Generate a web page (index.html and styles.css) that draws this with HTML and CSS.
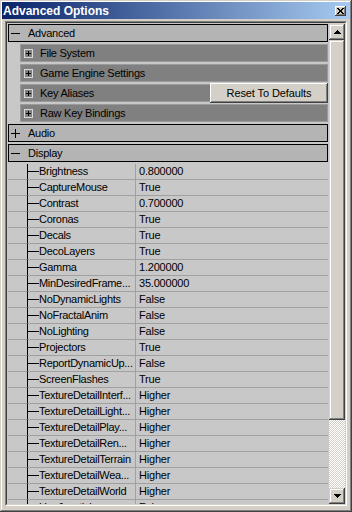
FILE: index.html
```html
<!DOCTYPE html>
<html lang="en">
<head>
  <meta charset="UTF-8" />
  <title>Advanced Options</title>
  <link rel="stylesheet" href="styles.css">
</head>
<body>
  <div class="window">
    <div class="titlebar">
      <span class="title">Advanced Options</span>
      <span class="close">
        <svg width="7" height="6" viewBox="0 0 7 6" shape-rendering="crispEdges"><path d="M0 0h2v1h-2zM5 0h2v1h-2zM1 1h2v1h-2zM4 1h2v1h-2zM2 2h3v2h-3zM1 4h2v1h-2zM4 4h2v1h-2zM0 5h2v1h-2zM5 5h2v1h-2z" fill="#000"/></svg>
      </span>
    </div>

    <div class="panel">
      <div class="panel-inner">
        <div class="list">
          <div class="group-head">
            <svg class="tog" width="9" height="9" viewBox="0 0 9 9" shape-rendering="crispEdges"><path d="M0 4.5h9" stroke="#000"/></svg>
            <span>Advanced</span>
          </div>
          <div class="sub-head">
            <svg class="box" width="9" height="9" viewBox="0 0 9 9" shape-rendering="crispEdges"><rect x="0.5" y="0.5" width="8" height="8" fill="none" stroke="#d8d8d8"/><path d="M2 4.5h5M4.5 2v5" stroke="#000"/></svg>
            <span>File System</span>
          </div>
          <div class="sub-head">
            <svg class="box" width="9" height="9" viewBox="0 0 9 9" shape-rendering="crispEdges"><rect x="0.5" y="0.5" width="8" height="8" fill="none" stroke="#d8d8d8"/><path d="M2 4.5h5M4.5 2v5" stroke="#000"/></svg>
            <span>Game Engine Settings</span>
          </div>
          <div class="sub-head">
            <svg class="box" width="9" height="9" viewBox="0 0 9 9" shape-rendering="crispEdges"><rect x="0.5" y="0.5" width="8" height="8" fill="none" stroke="#d8d8d8"/><path d="M2 4.5h5M4.5 2v5" stroke="#000"/></svg>
            <span>Key Aliases</span>
            <button class="reset">Reset To Defaults</button>
          </div>
          <div class="sub-head">
            <svg class="box" width="9" height="9" viewBox="0 0 9 9" shape-rendering="crispEdges"><rect x="0.5" y="0.5" width="8" height="8" fill="none" stroke="#d8d8d8"/><path d="M2 4.5h5M4.5 2v5" stroke="#000"/></svg>
            <span>Raw Key Bindings</span>
          </div>

          <div class="group-head">
            <svg class="tog" width="9" height="9" viewBox="0 0 9 9" shape-rendering="crispEdges"><path d="M0 4.5h9M4.5 0v9" stroke="#000"/></svg>
            <span>Audio</span>
          </div>

          <div class="group-head">
            <svg class="tog" width="9" height="9" viewBox="0 0 9 9" shape-rendering="crispEdges"><path d="M0 4.5h9" stroke="#000"/></svg>
            <span>Display</span>
          </div>

          <div class="props">
            <div class="prop"><span class="gutter"></span><span class="name">Brightness</span><span class="value">0.800000</span></div>
            <div class="prop"><span class="gutter"></span><span class="name">CaptureMouse</span><span class="value">True</span></div>
            <div class="prop"><span class="gutter"></span><span class="name">Contrast</span><span class="value">0.700000</span></div>
            <div class="prop"><span class="gutter"></span><span class="name">Coronas</span><span class="value">True</span></div>
            <div class="prop"><span class="gutter"></span><span class="name">Decals</span><span class="value">True</span></div>
            <div class="prop"><span class="gutter"></span><span class="name">DecoLayers</span><span class="value">True</span></div>
            <div class="prop"><span class="gutter"></span><span class="name">Gamma</span><span class="value">1.200000</span></div>
            <div class="prop"><span class="gutter"></span><span class="name">MinDesiredFrame...</span><span class="value">35.000000</span></div>
            <div class="prop"><span class="gutter"></span><span class="name">NoDynamicLights</span><span class="value">False</span></div>
            <div class="prop"><span class="gutter"></span><span class="name">NoFractalAnim</span><span class="value">False</span></div>
            <div class="prop"><span class="gutter"></span><span class="name">NoLighting</span><span class="value">False</span></div>
            <div class="prop"><span class="gutter"></span><span class="name">Projectors</span><span class="value">True</span></div>
            <div class="prop"><span class="gutter"></span><span class="name">ReportDynamicUp...</span><span class="value">False</span></div>
            <div class="prop"><span class="gutter"></span><span class="name">ScreenFlashes</span><span class="value">True</span></div>
            <div class="prop"><span class="gutter"></span><span class="name">TextureDetailInterf...</span><span class="value">Higher</span></div>
            <div class="prop"><span class="gutter"></span><span class="name">TextureDetailLight...</span><span class="value">Higher</span></div>
            <div class="prop"><span class="gutter"></span><span class="name">TextureDetailPlay...</span><span class="value">Higher</span></div>
            <div class="prop"><span class="gutter"></span><span class="name">TextureDetailRen...</span><span class="value">Higher</span></div>
            <div class="prop"><span class="gutter"></span><span class="name">TextureDetailTerrain</span><span class="value">Higher</span></div>
            <div class="prop"><span class="gutter"></span><span class="name">TextureDetailWea...</span><span class="value">Higher</span></div>
            <div class="prop"><span class="gutter"></span><span class="name">TextureDetailWorld</span><span class="value">Higher</span></div>
            <div class="prop"><span class="gutter"></span><span class="name">UseJoystick</span><span class="value">False</span></div>
          </div>
        </div>

        <div class="scrollbar">
          <div class="sb-btn">
            <svg width="7" height="4" viewBox="0 0 7 4" shape-rendering="crispEdges"><path d="M3 0h1v1h1v1h1v1h1v1h-7v-1h1v-1h1v-1h1z" fill="#000"/></svg>
          </div>
          <div class="sb-thumb"></div>
          <div class="sb-track"></div>
          <div class="sb-btn">
            <svg width="7" height="4" viewBox="0 0 7 4" shape-rendering="crispEdges"><path d="M0 0h7v1h-1v1h-1v1h-1v1h-1v-1h-1v-1h-1v-1h-1z" fill="#000"/></svg>
          </div>
        </div>
      </div>
    </div>
  </div>
</body>
</html>
```

FILE: styles.css
```css
* {
  box-sizing: border-box;
  margin: 0;
  padding: 0;
}

body {
  width: 352px;
  height: 512px;
  overflow: hidden;
  background: #d4d0c8;
  font-family: "Liberation Sans", Arial, sans-serif;
  font-size: 11px;
  letter-spacing: -0.25px;
  color: #000;
}

.window {
  height: 100%;
  display: flex;
  flex-direction: column;
  padding: 2px;
  box-shadow: inset -1px -1px #404040, inset 1px 1px #d4d0c8, inset -2px -2px #808080, inset 2px 2px #fff;
}

/* title bar */
.titlebar {
  flex: none;
  height: 17px;
  display: flex;
  align-items: center;
  padding: 0 4px 0 1px;
  background: linear-gradient(to right, #0a246a, #a6caf0);
}

.title {
  flex: 1;
  color: #fff;
  font-weight: bold;
  font-size: 12px;
  letter-spacing: 0;
}

.close {
  width: 11px;
  height: 10px;
  display: flex;
  align-items: center;
  justify-content: center;
  background: #d4d0c8;
  box-shadow: inset -1px -1px #404040, inset 1px 1px #fff, inset -2px -2px #808080;
}

/* sunken client area */
.panel {
  flex: 1;
  min-height: 0;
  margin: 2px 3px 4px;
  border: 1px solid;
  border-color: #808080 #fff #fff #808080;
}

.panel-inner {
  height: 100%;
  display: flex;
  border: 1px solid;
  border-color: #404040 #d4d0c8 #d4d0c8 #404040;
}

.list {
  flex: 1;
  overflow: hidden;
  padding: 1px 1px 0;
  background: #c8c8c8;
}

.group-head {
  height: 18px;
  margin-bottom: 2px;
  display: flex;
  align-items: center;
  gap: 8px;
  padding-left: 2px;
  background: #b4b4b4;
  border: 1px solid #000;
}

.sub-head {
  height: 18px;
  margin: 0 0 2px 12px;
  display: flex;
  align-items: center;
  gap: 7px;
  padding-left: 3px;
  background: #808080;
  border: 1px solid #9a9a9a;
}

.tog, .box {
  flex: none;
}

.reset {
  height: 20px;
  width: 118px;
  margin: -2px -1px -2px auto;
  font: inherit;
  letter-spacing: -0.1px;
  color: #000;
  background: #d4d0c8;
  border: none;
  box-shadow: inset -1px -1px #404040, inset 1px 1px #fff, inset -2px -2px #808080;
}

/* property grid */
.prop {
  display: grid;
  grid-template-columns: 19px 109px 1fr;
  height: 16px;
  line-height: 15px;
  white-space: nowrap;
}

.prop span {
  border-bottom: 1px solid #a0a0a0;
  overflow: hidden;
}

.name {
  padding-left: 11px;
  letter-spacing: -0.3px;
  border-left: 1px solid #000;
  border-right: 1px solid #a0a0a0;
  background: linear-gradient(#000, #000) no-repeat 0 7px / 11px 1px;
}

.value {
  padding-left: 3px;
  letter-spacing: -0.2px;
}

/* scrollbar */
.scrollbar {
  flex: none;
  width: 16px;
  display: flex;
  flex-direction: column;
  padding-top: 1px;
}

.sb-btn, .sb-thumb {
  background: #d4d0c8;
  box-shadow: inset -1px -1px #404040, inset 1px 1px #d4d0c8, inset -2px -2px #808080, inset 2px 2px #fff;
}

.sb-btn {
  height: 16px;
  display: flex;
  align-items: center;
  justify-content: center;
}

.sb-thumb {
  height: 380px;
}

.sb-track {
  flex: 1;
  background: repeating-conic-gradient(#fff 0 25%, #d4d0c8 0 50%) 0 0 / 2px 2px;
}
```
